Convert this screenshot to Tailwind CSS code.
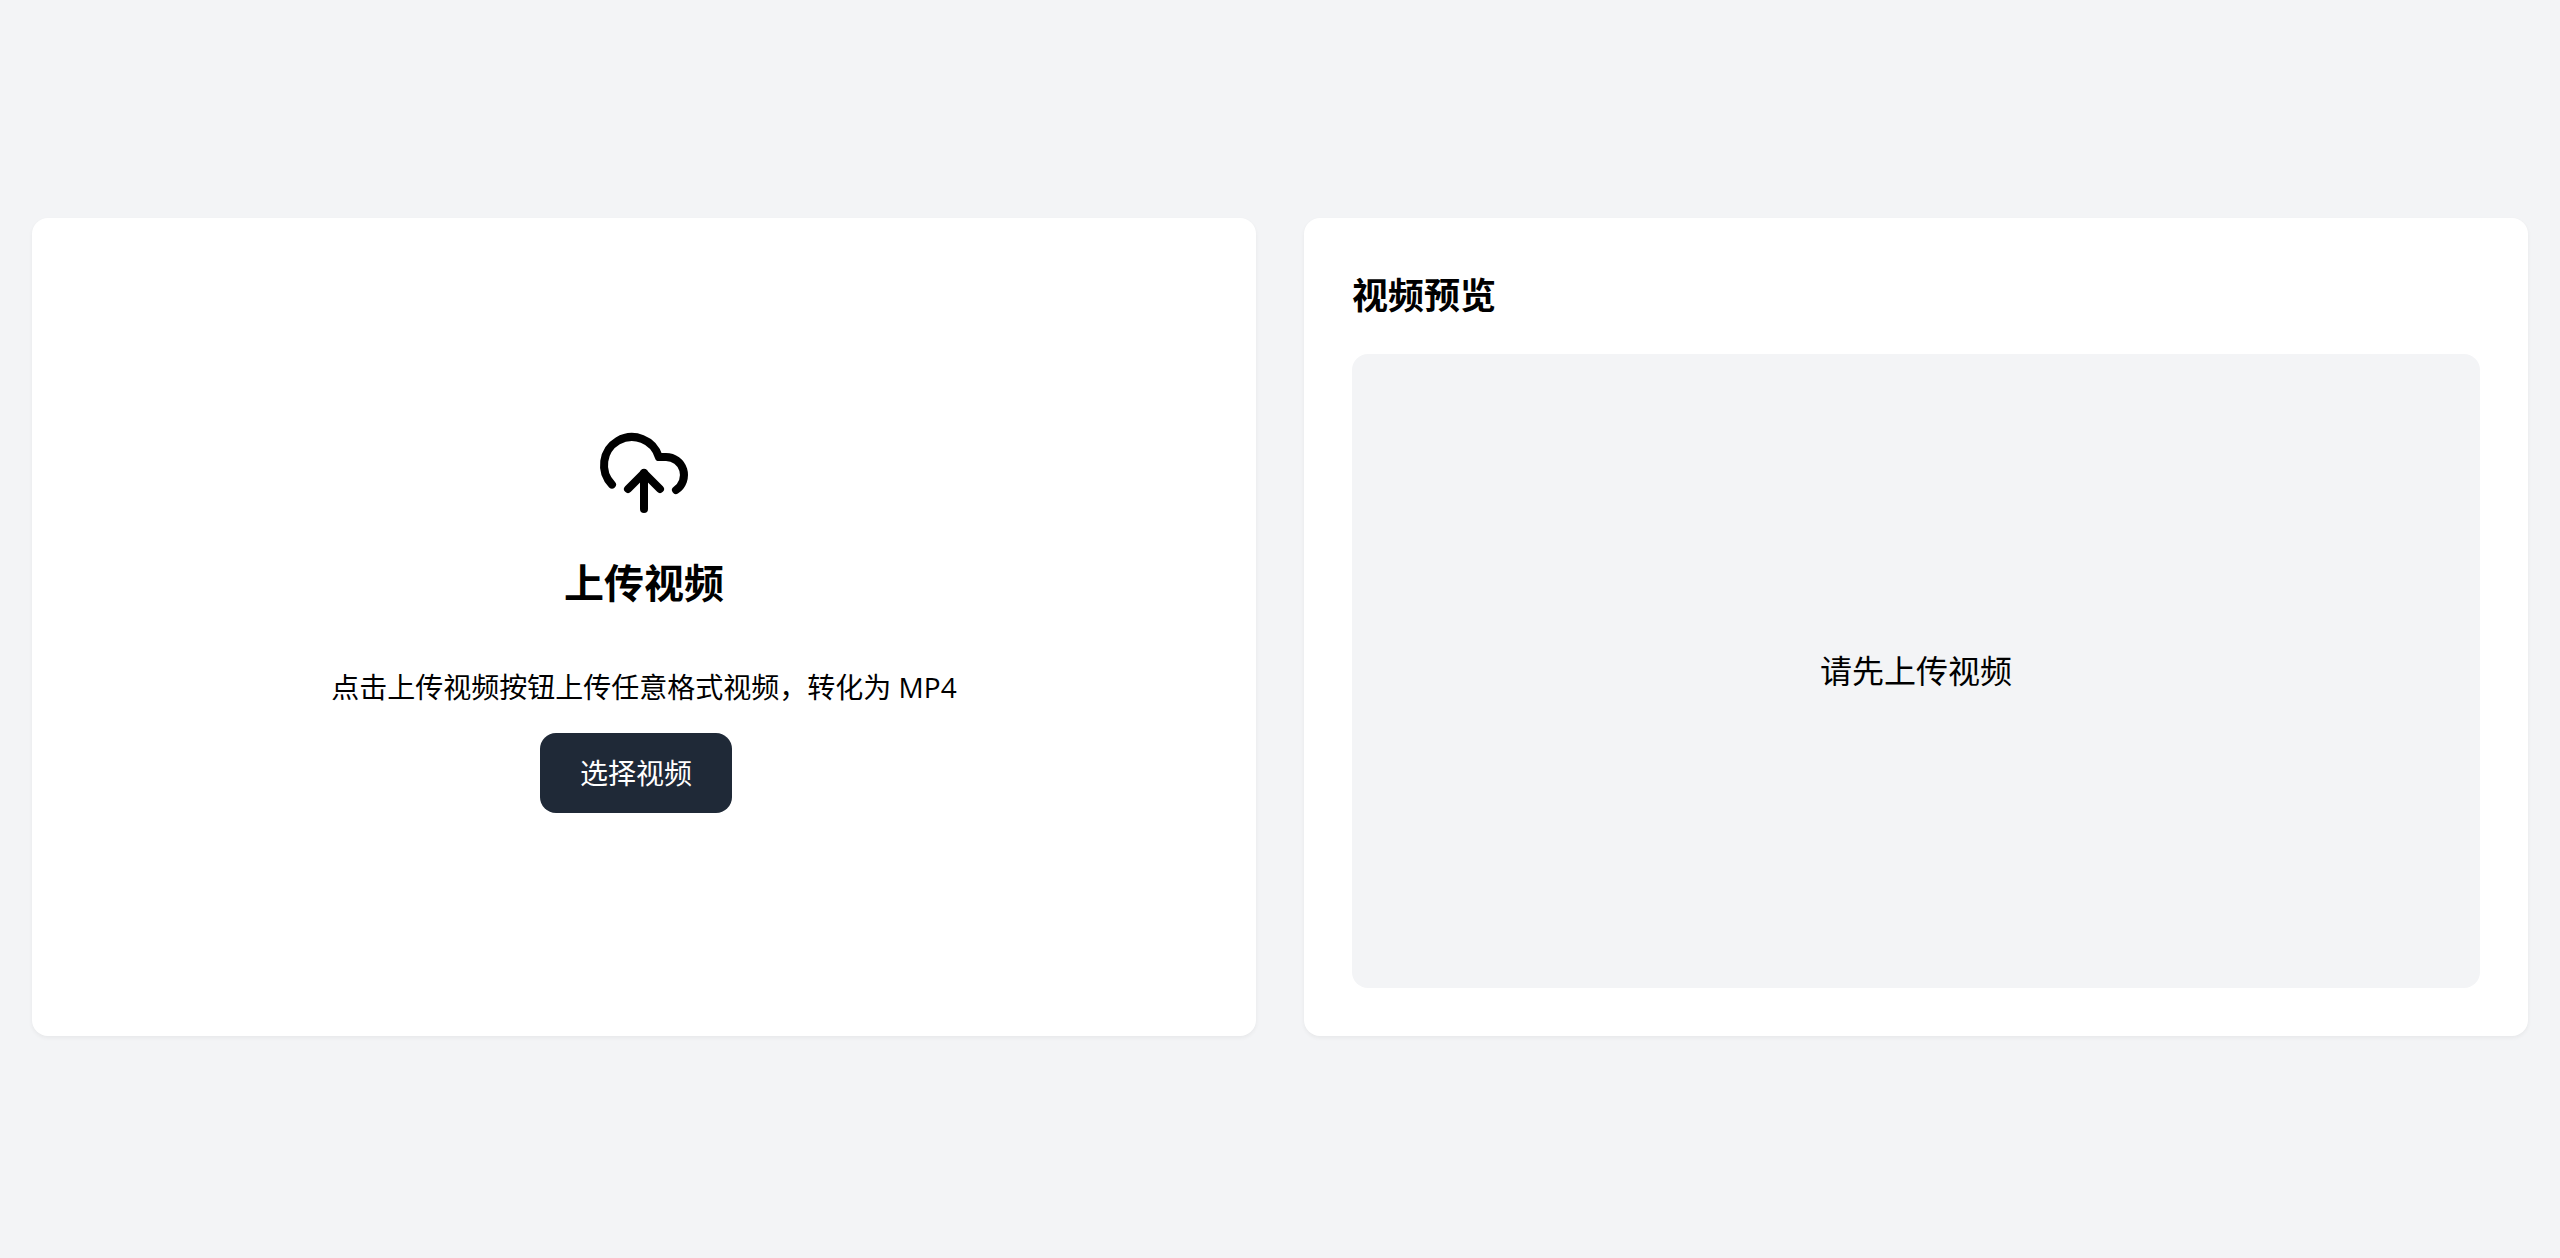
<!DOCTYPE html>
<html lang="zh-CN">

<head>
    <meta charset="UTF-8">
    <meta name="viewport" content="width=device-width, initial-scale=1.0">
    <title>上传视频</title>
    <script src="https://cdn.jsdelivr.net/npm/@tailwindcss/browser@4"></script>
</head>

<body class="bg-[#f3f4f6] text-black font-['Open_Sans','Noto_Sans_CJK_SC',sans-serif]">
    <main class="flex min-h-screen items-center px-8 pt-8 pb-9">
        <div class="grid w-full grid-cols-2 gap-12">
            <!-- Upload -->
            <section class="flex flex-col items-center justify-center rounded-2xl bg-white p-12 shadow-[0_2px_4px_0_rgb(0_0_0/0.05)]">
                <svg class="size-24" viewBox="0 0 24 24" fill="none" stroke="currentColor" stroke-width="2"
                    stroke-linecap="round" stroke-linejoin="round" aria-hidden="true">
                    <path d="M4 14.899A7 7 0 1 1 15.71 8h1.79a4.5 4.5 0 0 1 2.5 8.242" />
                    <path d="M12 12v9" />
                    <path d="m16 16-4-4-4 4" />
                </svg>
                <h2 class="mt-8 text-[40px] leading-15 font-bold">上传视频</h2>
                <p class="mt-13 text-[28px] leading-11">点击上传视频按钮上传任意格式视频，转化为 MP4</p>
                <button type="button" id="selectVideo"
                    class="mt-6 mr-4 mb-4 h-20 cursor-pointer rounded-2xl bg-[#1f2937] px-10 text-[28px] text-white hover:bg-gray-700">
                    选择视频
                </button>
                <input id="videoFile" type="file" accept="video/*" class="hidden" aria-label="选择视频">
            </section>

            <!-- Preview -->
            <section class="rounded-2xl bg-white p-12 shadow-[0_2px_4px_0_rgb(0_0_0/0.05)]">
                <h2 class="mb-7 text-4xl leading-15 font-bold">视频预览</h2>
                <div id="preview" class="flex aspect-video items-center justify-center overflow-hidden rounded-2xl bg-[#f3f4f6]">
                    <p class="text-[32px] leading-12">请先上传视频</p>
                </div>
            </section>
        </div>
    </main>

    <script>
        const videoFile = document.getElementById("videoFile");
        const preview = document.getElementById("preview");

        document.getElementById("selectVideo").addEventListener("click", () => videoFile.click());

        videoFile.addEventListener("change", () => {
            const file = videoFile.files[0];
            if (!file) return;

            const video = document.createElement("video");
            video.src = URL.createObjectURL(file);
            video.controls = true;
            video.className = "w-full h-full";
            preview.replaceChildren(video);
        });
    </script>
</body>

</html>
